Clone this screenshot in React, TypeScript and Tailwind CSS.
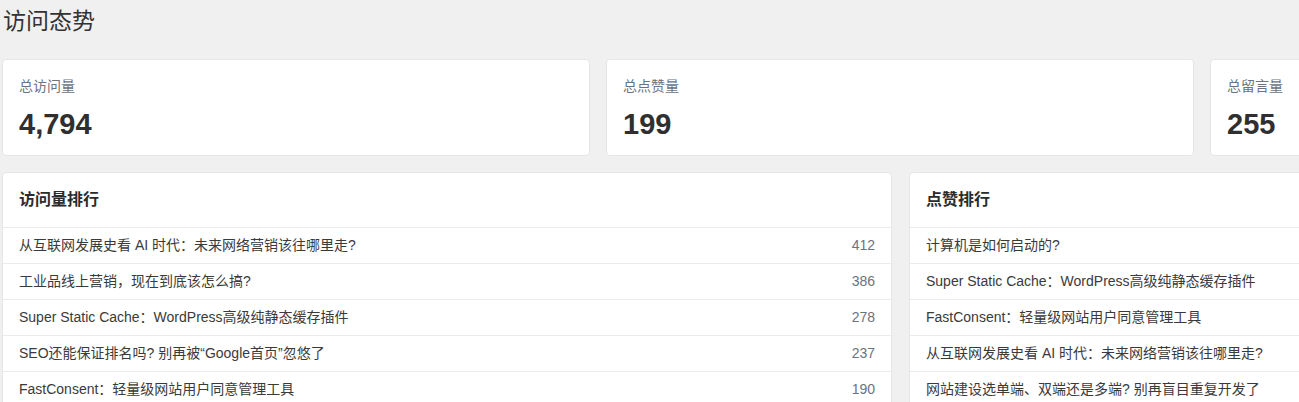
import React from "react";

const font = { fontFamily: '"Liberation Sans", "Noto Sans CJK SC", sans-serif' };

const stats = [
  { label: "总访问量", value: "4,794" },
  { label: "总点赞量", value: "199" },
  { label: "总留言量", value: "255" },
];

const visits = [
  { title: "从互联网发展史看 AI 时代：未来网络营销该往哪里走?", n: 412 },
  { title: "工业品线上营销，现在到底该怎么搞?", n: 386 },
  { title: "Super Static Cache：WordPress高级纯静态缓存插件", n: 278 },
  { title: "SEO还能保证排名吗? 别再被“Google首页”忽悠了", n: 237 },
  { title: "FastConsent：轻量级网站用户同意管理工具", n: 190 },
];

const likes = [
  { title: "计算机是如何启动的?", n: 32 },
  { title: "Super Static Cache：WordPress高级纯静态缓存插件", n: 28 },
  { title: "FastConsent：轻量级网站用户同意管理工具", n: 21 },
  { title: "从互联网发展史看 AI 时代：未来网络营销该往哪里走?", n: 18 },
  { title: "网站建设选单端、双端还是多端? 别再盲目重复开发了", n: 15 },
];

function RankCard({ title, rows }: { title: string; rows: { title: string; n: number }[] }) {
  return (
    <div className="w-[890px] shrink-0 bg-white border border-[#e6e6e6] rounded-[4px]">
      <div className="h-[55px] flex items-center px-4 border-b border-[#ebebeb]">
        <span className="text-[16px] font-bold text-[#2b2b2b]">{title}</span>
      </div>
      {rows.map((r, i) => (
        <div
          key={i}
          className="h-9 flex items-center justify-between px-4 border-b border-[#ebebeb] text-[14px]"
        >
          <span className="text-[#3a3a3a]">{r.title}</span>
          <span className="text-[#6b7280]">{r.n}</span>
        </div>
      ))}
    </div>
  );
}

export default function App() {
  return (
    <div
      className="w-[1299px] h-[402px] overflow-hidden bg-[#f0f0f0] pl-[2px]"
      style={font}
    >
      <h1 className="pt-[5px] pl-px text-[23px] leading-[32px] text-[#333] mb-[22px]">访问态势</h1>
      <div className="flex gap-4">
        {stats.map((s) => (
          <div
            key={s.label}
            className="w-[588px] h-[97px] shrink-0 bg-white border border-[#e6e6e6] rounded-[4px] px-4 pt-[16px]"
          >
            <div className="text-[14px] leading-5 text-[#6b7280]">{s.label}</div>
            <div className="mt-[9px] text-[29px] leading-[38px] font-bold text-[#2f2f2f]">{s.value}</div>
          </div>
        ))}
      </div>
      <div className="flex gap-[17px] mt-4">
        <RankCard title="访问量排行" rows={visits} />
        <RankCard title="点赞排行" rows={likes} />
      </div>
    </div>
  );
}
